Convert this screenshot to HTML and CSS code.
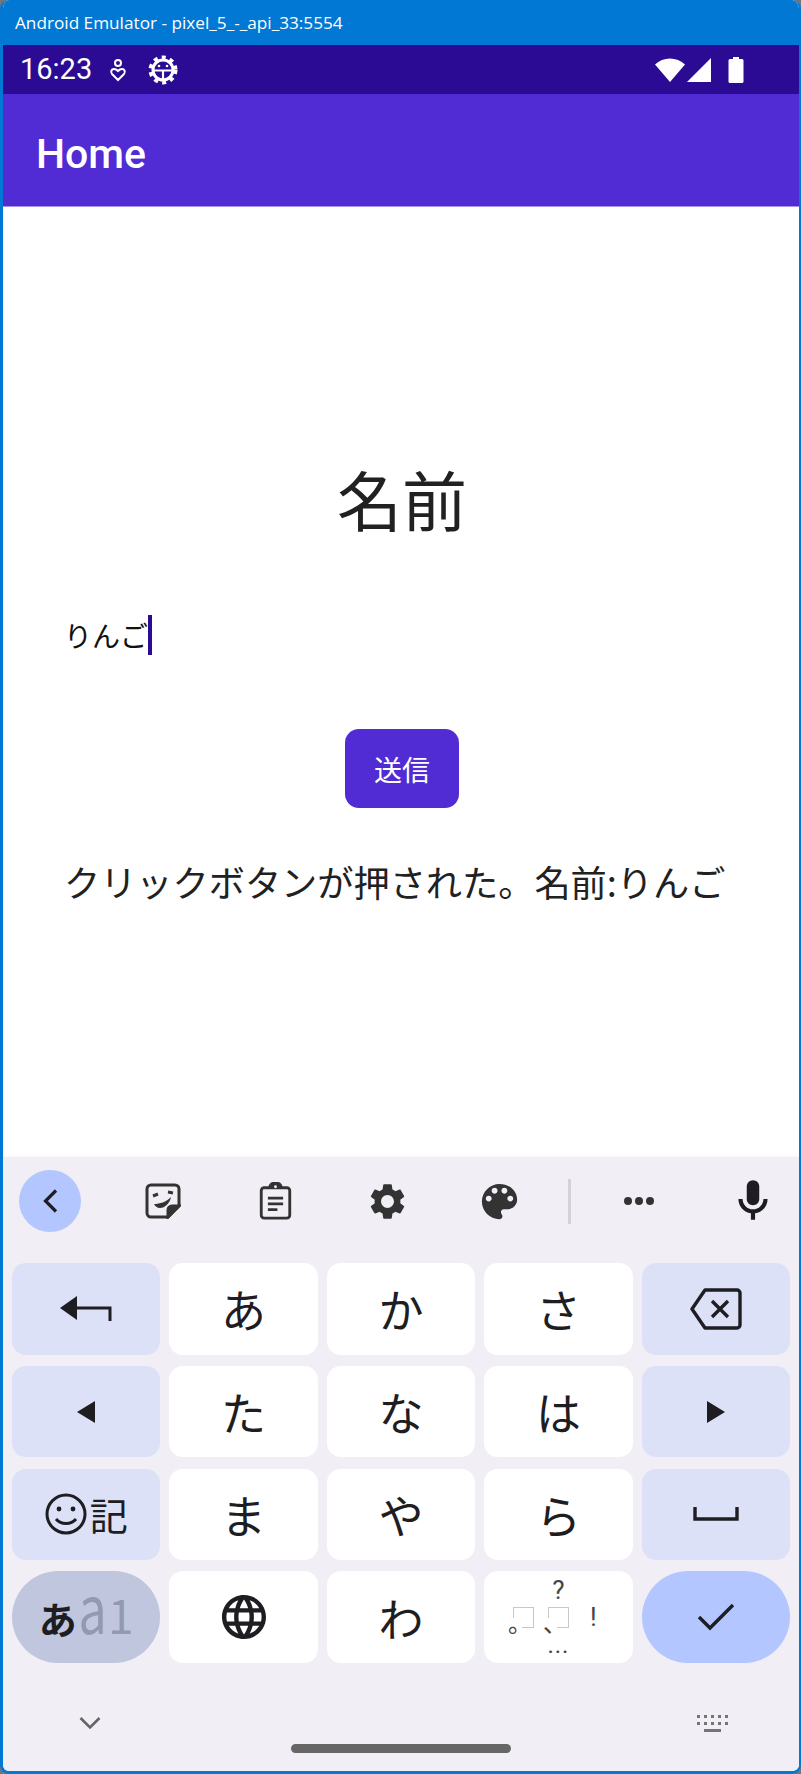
FILE: index.html
```html
<!DOCTYPE html>
<html lang="ja">
<head>
<meta charset="utf-8">
<title>Android Emulator</title>
<link rel="stylesheet" href="styles.css">
</head>
<body>
<div class="window">
  <header class="titlebar">Android Emulator - pixel_5_-_api_33:5554</header>
  <div class="statusbar">
    <span class="time">16:23</span>
    <svg class="st-heart" viewBox="0 0 18 24" width="18" height="24" fill="none" stroke="#fff" stroke-width="2"><circle cx="9" cy="5" r="3"/><path d="M9 22l-6-6c-1.800-2-.5-5 2-5 1.800 0 3 1 4 2 1-1 2.200-2 4-2 2.500 0 3.800 3 2 5z"/></svg>
    <svg class="st-gear" viewBox="0 0 30 30" width="30" height="30" fill="none" stroke="#fff"><circle cx="15" cy="15" r="12.500" stroke-width="4" stroke-dasharray="4 4.180"/><circle cx="15" cy="15" r="10" stroke-width="3"/><path d="M5 15.500h20M15 15.500V25" stroke-width="2.200"/><circle cx="11" cy="11" r="1.300" fill="#fff" stroke="none"/><circle cx="19" cy="11" r="1.300" fill="#fff" stroke="none"/></svg>
    <span class="spacer"></span>
    <svg viewBox="0 0 32 26" width="32" height="26" fill="#fff"><path d="M1 7.500C9 -0.500 23 -0.500 31 7.500L16 25z"/></svg>
    <svg viewBox="0 0 26 26" width="26" height="26" fill="#fff"><path d="M25 1v24H1z"/></svg>
    <svg class="st-batt" viewBox="0 0 16 26" width="16" height="26" fill="#fff"><path d="M5 0h6v2h3a1.500 1.500 0 0 1 1.500 1.500V24.500A1.500 1.500 0 0 1 14 26H2A1.500 1.500 0 0 1 .5 24.500V3.500A1.500 1.500 0 0 1 2 2h3z"/></svg>
  </div>
  <div class="appbar">Home</div>
  <main class="content">
    <h1 class="heading">名前</h1>
    <div class="field"><span>りんご</span><i class="caret"></i></div>
    <button class="send">送信</button>
    <p class="result">クリックボタンが押された。名前:りんご</p>
  </main>
  <section class="keyboard">
    <div class="toolbar">
      <div class="tool back"><svg viewBox="0 0 24 24" width="24" height="24" fill="none" stroke="#1d1d22" stroke-width="3.200"><path d="M18 1.500L7.500 12 18 22.500"/></svg></div>
      <div class="tool sticker"><svg viewBox="0 0 36 36" width="36" height="36" fill="none" stroke="#333" stroke-width="3"><path d="M23 34H6a4 4 0 0 1-4-4V6a4 4 0 0 1 4-4h24a4 4 0 0 1 4 4v17z"/><path d="M34 23L23 34v-7a4 4 0 0 1 4-4z" fill="#333"/><path d="M8 13l5-2M23 9l5 1" stroke-width="3"/><path d="M9 21c6 0 12-2 17-7-1 6-6 11-11 11-3 0-5-2-6-4z" fill="#333" stroke="none"/></svg></div>
      <div class="tool"><svg viewBox="0 0 34 40" width="33" height="38" fill="none" stroke="#333" stroke-width="3"><rect x="2" y="6" width="30" height="32" rx="3"/><path d="M11 6c0-7 12-7 12 0" fill="#333"/><path d="M9 17h16M9 23h16M9 29h10" stroke-width="3"/><circle cx="17" cy="5" r="1.500" fill="#f1eff5" stroke="none"/></svg></div>
      <div class="tool"><svg viewBox="0 0 24 24" width="43" height="43" fill="#333"><path d="M19.140 12.940c.04-.3.06-.61.06-.94 0-.32-.02-.64-.07-.94l2.030-1.580c.18-.14.23-.41.12-.61l-1.920-3.320c-.12-.22-.37-.29-.59-.22l-2.390.96c-.5-.38-1.030-.7-1.620-.94l-.36-2.540c-.04-.24-.24-.41-.48-.41h-3.840c-.24 0-.43.17-.47.41l-.36 2.540c-.59.24-1.130.57-1.620.94l-2.390-.96c-.22-.08-.47 0-.59.22L2.740 8.870c-.12.21-.08.47.12.61l2.030 1.580c-.05.3-.09.63-.09.94s.02.64.07.94l-2.030 1.580c-.18.14-.23.41-.12.61l1.920 3.320c.12.22.37.29.59.22l2.390-.96c.5.38 1.030.7 1.620.94l.36 2.540c.05.24.24.41.48.41h3.840c.24 0 .44-.17.47-.41l.36-2.540c.59-.24 1.130-.56 1.620-.94l2.390.96c.22.08.47 0 .59-.22l1.920-3.320c.12-.22.07-.47-.12-.61l-2.010-1.580zM12 15.600c-1.980 0-3.600-1.620-3.600-3.600s1.620-3.600 3.600-3.600 3.600 1.620 3.600 3.600-1.620 3.600-3.600 3.600z"/></svg></div>
      <div class="tool"><svg viewBox="0 0 24 24" width="47" height="47" fill="#333"><path d="M12 3c-4.970 0-9 4.030-9 9s4.030 9 9 9c.83 0 1.500-.67 1.500-1.500 0-.39-.15-.74-.39-1.010-.23-.26-.38-.61-.38-.99 0-.83.67-1.500 1.500-1.500H16c2.760 0 5-2.240 5-5 0-4.420-4.030-8-9-8zm-5.500 9c-.83 0-1.500-.67-1.500-1.500S5.670 9 6.500 9 8 9.670 8 10.500 7.330 12 6.500 12zm3-4C8.670 8 8 7.330 8 6.500S8.670 5 9.500 5s1.500.67 1.500 1.500S10.330 8 9.500 8zm5 0c-.83 0-1.500-.67-1.500-1.500S13.670 5 14.500 5s1.500.67 1.500 1.500S15.330 8 14.500 8zm3 4c-.83 0-1.500-.67-1.500-1.500S16.670 9 17.500 9s1.500.67 1.500 1.500-.67 1.500-1.500 1.500z"/></svg></div>
      <div class="divider"></div>
      <div class="tool dots"><svg viewBox="0 0 32 10" width="32" height="10" fill="#333"><circle cx="5" cy="5" r="4"/><circle cx="16" cy="5" r="4"/><circle cx="27" cy="5" r="4"/></svg></div>
      <div class="tool"><svg viewBox="0 0 24 24" width="50" height="50" fill="#1d1d22"><path d="M12 14c1.660 0 3-1.340 3-3V5c0-1.660-1.340-3-3-3S9 3.340 9 5v6c0 1.660 1.340 3 3 3z"/><path d="M17 11c0 2.760-2.240 5-5 5s-5-2.240-5-5H5c0 3.530 2.610 6.430 6 6.920V21h2v-3.080c3.390-.49 6-3.390 6-6.920h-2z"/></svg></div>
    </div>
    <div class="keys">
      <div class="key side"><svg viewBox="0 0 52 26" width="52" height="26" fill="none" stroke="#1d1d22" stroke-width="3"><path d="M0 12L17 0v24z" fill="#1d1d22" stroke="none"/><path d="M15 12h35v13"/></svg></div>
      <div class="key">あ</div>
      <div class="key">か</div>
      <div class="key">さ</div>
      <div class="key side"><svg viewBox="0 0 52 42" width="52" height="42" fill="none" stroke="#1d1d22" stroke-width="3.400" stroke-linejoin="round"><path d="M15 2h32a3 3 0 0 1 3 3v32a3 3 0 0 1-3 3H15L2 21z"/><path d="M22 13l16 16M38 13L22 29"/></svg></div>

      <div class="key side"><svg viewBox="0 0 20 24" width="20" height="24" fill="#1d1d22"><path d="M19 1v22L1 12z"/></svg></div>
      <div class="key">た</div>
      <div class="key">な</div>
      <div class="key">は</div>
      <div class="key side"><svg viewBox="0 0 20 24" width="20" height="24" fill="#1d1d22"><path d="M1 1v22l18-11z"/></svg></div>

      <div class="key side sym"><svg viewBox="0 0 42 42" width="42" height="42" fill="none" stroke="#1d1d22" stroke-width="3"><circle cx="21" cy="21" r="19"/><circle cx="14" cy="16" r="2.400" fill="#1d1d22" stroke="none"/><circle cx="28" cy="16" r="2.400" fill="#1d1d22" stroke="none"/><path d="M11 26c5 6 15 6 20 0"/></svg><span class="ki">記</span></div>
      <div class="key">ま</div>
      <div class="key">や</div>
      <div class="key">ら</div>
      <div class="key side"><svg viewBox="0 0 46 14" width="46" height="14" fill="none" stroke="#1d1d22" stroke-width="3.400"><path d="M2 0v12h42V0"/></svg></div>

      <div class="key pill mode"><b>あ</b><span class="m-a">a</span><span class="m-1">1</span></div>
      <div class="key"><svg viewBox="2 2 20 20" width="44" height="44" fill="#1d1d22"><path d="M11.990 2C6.470 2 2 6.480 2 12s4.470 10 9.990 10C17.520 22 22 17.520 22 12S17.520 2 11.990 2zm6.930 6h-2.950c-.32-1.250-.78-2.450-1.380-3.560 1.840.63 3.370 1.910 4.330 3.560zM12 4.040c.83 1.200 1.480 2.530 1.910 3.960h-3.820c.43-1.430 1.080-2.760 1.910-3.960zM4.260 14C4.100 13.360 4 12.690 4 12s.1-1.360.26-2h3.380c-.08.66-.14 1.320-.14 2s.06 1.340.14 2H4.260zm.82 2h2.950c.32 1.250.78 2.450 1.380 3.560-1.840-.63-3.370-1.900-4.330-3.560zm2.950-8H5.080c.96-1.660 2.490-2.930 4.330-3.560C8.810 5.550 8.350 6.750 8.030 8zM12 19.960c-.83-1.200-1.480-2.530-1.910-3.960h3.820c-.43 1.430-1.080 2.760-1.910 3.960zM14.340 14H9.660c-.09-.66-.16-1.320-.16-2s.07-1.350.16-2h4.680c.09.65.16 1.320.16 2s-.07 1.340-.16 2zm.25 5.560c.6-1.110 1.060-2.310 1.380-3.560h2.950c-.96 1.650-2.490 2.930-4.330 3.560zM16.360 14c.08-.66.14-1.320.14-2s-.06-1.340-.14-2h3.380c.16.64.26 1.310.26 2s-.1 1.360-.26 2h-3.380z"/></svg></div>
      <div class="key">わ</div>
      <div class="key punct">
        <span class="q">?</span>
        <div class="prow"><span class="pbox"><span class="pg">。</span></span><span class="pbox"><span class="pg">、</span></span><span class="ex">!</span></div>
        <span class="more">...</span>
      </div>
      <div class="key pill enter"><svg viewBox="0 0 38 28" width="38" height="28" fill="none" stroke="#1d1d22" stroke-width="3.400"><path d="M2 14l11 11L36 2"/></svg></div>
    </div>
    <div class="navrow">
      <svg viewBox="0 0 22 14" width="22" height="14" fill="none" stroke="#666" stroke-width="2.600"><path d="M1.500 2L11 11.500 20.500 2"/></svg>
      <div class="handle"></div>
      <svg class="kbicon" viewBox="0 0 32 18" width="32" height="18" fill="#757575"><path d="M0 0h3v3H0zM7 0h3v3H7zM14 0h3v3h-3zM21 0h3v3h-3zM28 0h3v3h-3zM0 7h3v3H0zM7 7h3v3H7zM14 7h3v3h-3zM21 7h3v3h-3zM28 7h3v3h-3zM7 14h17v3H7z"/></svg>
    </div>
  </section>
</div>
</body>
</html>
```
FILE: styles.css
```css
* { box-sizing: border-box; }
html, body { margin: 0; padding: 0; height: 100%; }
body { background: #6e7680; overflow: hidden; }
.window {
  height: 1774px;
  display: flex;
  flex-direction: column;
  background: #fff;
  border-style: solid;
  border-color: #0078d4;
  border-width: 0 2px 3px 3px;
  border-radius: 9px;
  overflow: hidden;
  font-family: "Noto Sans CJK JP", "Roboto", sans-serif;
  color: #212121;
}
.titlebar {
  height: 45px;
  flex: none;
  background: #0078d4;
  color: #fff;
  font: 17.200px/46px "Open Sans", sans-serif;
  padding-left: 12px;
  white-space: nowrap;
}
.statusbar {
  height: 49px;
  flex: none;
  background: #2b0b94;
  display: flex;
  align-items: center;
  padding: 0 55px 0 17px;
  color: #fff;
}
.time { font: 29px/51px Roboto, sans-serif; width: 89px; }
.st-heart { margin-right: 21px; }
.spacer { flex: 1; }
.st-batt { margin-left: 16px; }
.appbar {
  height: 113px;
  flex: none;
  background: #512bd4;
  border-bottom: 1px solid #a593e8;
  color: #fff;
  font: 500 41px/108px Roboto, sans-serif;
  padding: 6px 0 0 33px;
}
.content {
  flex: 1;
  padding: 249px 59px 0 61px;
  display: flex;
  flex-direction: column;
  align-items: flex-start;
}
.heading {
  align-self: center;
  margin: 0 0 75px;
  font-size: 65px;
  font-weight: 400;
  line-height: 84px;
}
.field {
  height: 40px;
  display: flex;
  align-items: center;
  font-size: 28px;
  line-height: 40px;
  color: #111;
  margin-bottom: 74px;
}
.caret { display: block; width: 4px; height: 40px; background: #2b0b94; }
.send {
  align-self: center;
  margin: 0 0 47px;
  width: 114px;
  height: 79px;
  border: 0;
  border-radius: 14px;
  background: #512bd4;
  color: #fff;
  font: 28px "Noto Sans CJK JP", sans-serif;
}
.result { margin: 0; font-size: 36.200px; line-height: 52px; white-space: nowrap; }
.keyboard {
  height: 614px;
  flex: none;
  background: #f1eff5;
  box-shadow: 0 -1px 3px rgba(0,0,0,.04);
  display: flex;
  flex-direction: column;
}
.toolbar {
  height: 106px;
  flex: none;
  display: grid;
  grid-template-columns: 62px 138px 112px 112px 112px 16px 124px 104px;
  align-items: center;
  padding: 13px 0 31px 16px;
}
.tool { display: flex; align-items: center; justify-content: center; height: 62px; }
.tool svg { display: block; }
.back { width: 62px; border-radius: 50%; background: #b3c6ff; }
.sticker { margin-left: 26px; }
.dots, .dots + .tool { margin-left: 12px; }
.divider { width: 3px; height: 45px; margin-left: 13px; background: #d2d2d8; }
.keys {
  display: grid;
  grid-template-columns: repeat(5, 1fr);
  grid-auto-rows: 91.500px;
  gap: 11.300px 9px;
  padding: 0 9px;
}
.key {
  background: #fff;
  border-radius: 14px;
  display: flex;
  align-items: center;
  justify-content: center;
  font-size: 45px;
  color: #1d1d22;
  line-height: 1;
}
.side { background: #dde1f7; }
.sym { gap: 3px; }
.ki { font-size: 38px; }
.pill { border-radius: 46px; }
.mode { background: #bfc6de; font-size: 38px; align-items: baseline; padding-top: 1px; }
.mode b { font-weight: 700; line-height: 1; }
.m-a, .m-1 { color: #9299b0; font-weight: 400; line-height: 1; display: inline-block; }
.m-a { font-size: 66px; margin: 0 -3px 0 -3px; transform: scaleX(.76); }
.m-1 { font-size: 46px; }
.enter { background: #b3c6ff; }
.punct { flex-direction: column; justify-content: flex-start; font-family: Roboto, sans-serif; color: #444; padding-top: 4px; }
.q { font-size: 26px; line-height: 30px; }
.prow { display: flex; align-items: center; height: 22px; margin-top: 1px; }
.pbox {
  position: relative;
  width: 21px;
  height: 21px;
  margin-right: 14px;
  border-top: 1px solid #c8c8c8;
  border-right: 1px solid #c8c8c8;
}
.pbox::before {
  content: "";
  position: absolute;
  right: 0;
  bottom: 0;
  width: 11px;
  border-bottom: 1px solid #c8c8c8;
}
.pbox::after {
  content: "";
  position: absolute;
  left: 0;
  top: 0;
  height: 10px;
  border-left: 1px solid #c8c8c8;
}
.pg {
  position: absolute;
  left: -5px;
  top: 2px;
  font: 24px/24px "Noto Sans CJK JP", sans-serif;
  color: #444;
}
.ex { font-size: 26px; line-height: 22px; width: 21px; text-align: center; }
.more { font-size: 24px; line-height: 14px; margin-top: 10px; letter-spacing: 1px; }
.navrow {
  flex: 1;
  display: grid;
  grid-template-columns: 1fr 220px 1fr;
  align-items: start;
  padding-top: 53px;
}
.navrow > svg:first-child { justify-self: start; margin-left: 76px; }
.handle { margin-top: 28px; height: 9px; border-radius: 5px; background: #666; }
.kbicon { justify-self: end; margin-right: 70px; margin-top: -1px; }
```
